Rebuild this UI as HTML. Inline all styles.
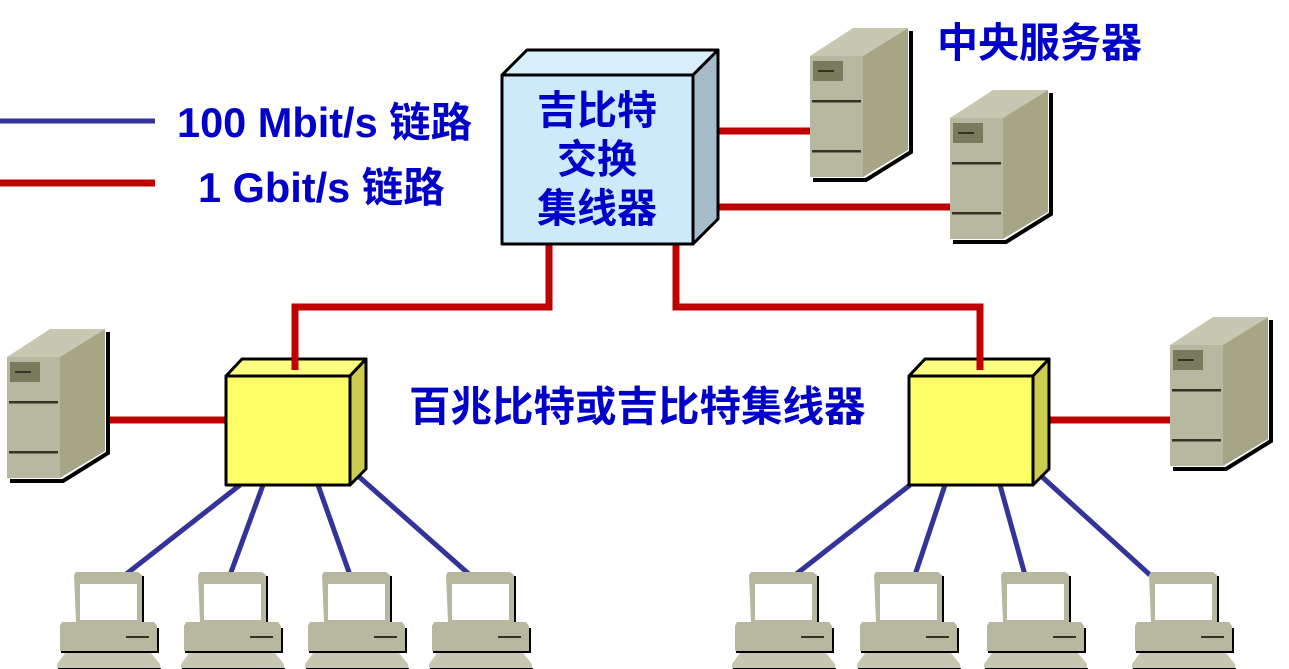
<!DOCTYPE html>
<html><head><meta charset="utf-8"><style>
html,body{margin:0;padding:0;background:#fff;width:1289px;height:669px;overflow:hidden}
svg{display:block}
text{font-family:"Liberation Sans","Noto Sans CJK SC",sans-serif;font-weight:bold;fill:#0000c8}
</style></head><body>
<svg width="1289" height="669" viewBox="0 0 1289 669" xmlns="http://www.w3.org/2000/svg">
<defs>
<g id="srv">
<polyline points="3,152 56,152 101,124 101,3" fill="none" stroke="#000" stroke-width="4"/>
<polygon points="0,28 43,0 98,0 53,28" fill="#c8c8b2"/>
<polygon points="53,28 98,0 98,122 53,149" fill="#a6a686"/>
<rect x="0" y="28" width="53" height="121" fill="#b8b8a0"/>
<rect x="3" y="33" width="30" height="20" fill="#7a7a5c"/>
<rect x="8" y="42" width="16" height="2" fill="#333326"/>
<rect x="2" y="72" width="49" height="2.5" fill="#333326"/>
<rect x="2" y="122" width="49" height="2.5" fill="#333326"/>
</g>
<g id="pc">
<polygon points="19,0 81,0 85,3 85,50 19,50 17,3" fill="#b8b8a0"/>
<polyline points="86,4 86,50" stroke="#000" stroke-width="2"/>
<rect x="23" y="12" width="57" height="36" fill="#fff"/>
<polygon points="5,50 97,50 100,54 100,79 3,79 3,54" fill="#b8b8a0"/>
<polyline points="4,80 101,80 101,56" fill="none" stroke="#000" stroke-width="2"/>
<rect x="69" y="64" width="23" height="2" fill="#333326"/>
<polygon points="8,81 94,81 103,92 103,96 0,96 0,92" fill="#c8c8b2"/>
<polyline points="1,97 104,97" stroke="#000" stroke-width="2"/>
</g>
</defs>
<line x1="0" y1="121" x2="155" y2="121" stroke="#333399" stroke-width="5"/>
<line x1="0" y1="183" x2="155" y2="183" stroke="#c00000" stroke-width="7"/>
<text x="177" y="137" font-size="41.5">100 Mbit/s 链路</text>
<text x="198" y="202" font-size="41.5">1 Gbit/s 链路</text>
<text x="937" y="57" font-size="41">中央服务器</text>
<text x="409" y="421" font-size="41.5">百兆比特或吉比特集线器</text>
<g stroke="#c00000" stroke-width="7" fill="none">
<line x1="715" y1="131" x2="812" y2="131"/>
<line x1="715" y1="207" x2="952" y2="207"/>
<polyline points="549,244 549,307 295,307 295,370"/>
<polyline points="676,244 676,307 980,307 980,370"/>
<line x1="107" y1="420" x2="228" y2="420"/>
<line x1="1036" y1="420" x2="1172" y2="420"/>
</g>
<g stroke="#333399" stroke-width="5">
<line x1="240" y1="485" x2="125" y2="575"/>
<line x1="263" y1="485" x2="230" y2="575"/>
<line x1="318" y1="485" x2="350" y2="575"/>
<line x1="357" y1="475" x2="470" y2="575"/>
<line x1="910" y1="485" x2="795" y2="575"/>
<line x1="945" y1="485" x2="915" y2="575"/>
<line x1="1000" y1="485" x2="1025" y2="575"/>
<line x1="1040" y1="475" x2="1150" y2="575"/>
</g>
<use href="#srv" x="7" y="329"/>
<use href="#srv" x="810" y="28"/>
<use href="#srv" x="950" y="90"/>
<use href="#srv" x="1170" y="317"/>
<g stroke="#000" stroke-width="3" stroke-linejoin="round">
<polygon points="502,75 527,50 718,50 693,75" fill="#d8eefb"/>
<polygon points="693,75 718,50 718,219 693,244" fill="#a6bccb"/>
<rect x="502" y="75" width="191" height="169" fill="#cdeafb"/>
</g>
<text x="597" y="124" font-size="40" text-anchor="middle" font-weight="normal">吉比特</text>
<text x="597" y="173" font-size="40" text-anchor="middle" font-weight="normal">交换</text>
<text x="597" y="222" font-size="40" text-anchor="middle" font-weight="normal">集线器</text>
<g stroke="#000" stroke-width="3" stroke-linejoin="round">
<polygon points="226,376 242,359 366,359 350,376" fill="#ffff80"/>
<polygon points="350,376 366,359 366,469 350,485" fill="#cccc50"/>
<rect x="226" y="376" width="124" height="109" fill="#ffff66"/>
<polygon points="909,376 925,359 1049,359 1033,376" fill="#ffff80"/>
<polygon points="1033,376 1049,359 1049,469 1033,485" fill="#cccc50"/>
<rect x="909" y="376" width="124" height="109" fill="#ffff66"/>
</g>
<line x1="295" y1="355" x2="295" y2="370" stroke="#c00000" stroke-width="7"/>
<line x1="980" y1="355" x2="980" y2="370" stroke="#c00000" stroke-width="7"/>
<use href="#pc" x="57" y="572"/>
<use href="#pc" x="181" y="572"/>
<use href="#pc" x="305" y="572"/>
<use href="#pc" x="429" y="572"/>
<use href="#pc" x="732" y="572"/>
<use href="#pc" x="857" y="572"/>
<use href="#pc" x="984" y="572"/>
<use href="#pc" x="1132" y="572"/>
</svg>
</body></html>
